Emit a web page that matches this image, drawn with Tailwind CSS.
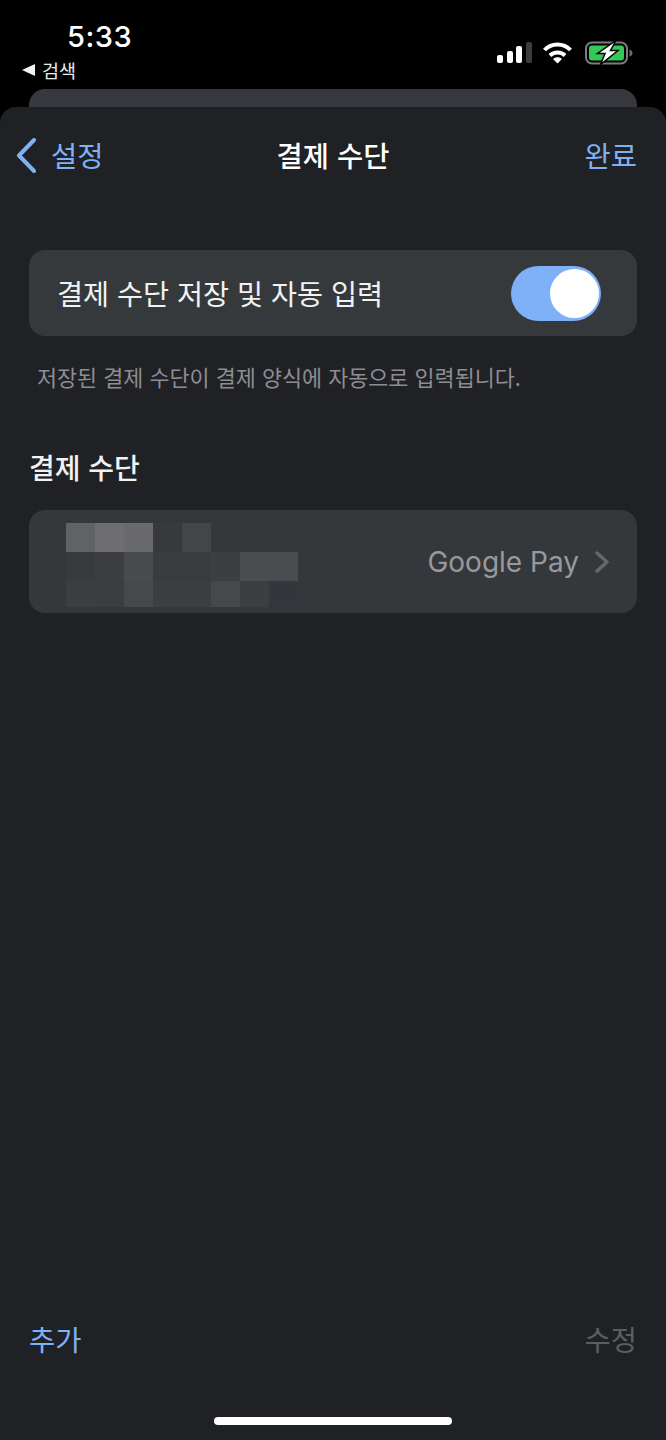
<!DOCTYPE html>
<html lang="ko">
    <head>
        <meta charset="UTF-8" />
        <meta name="viewport" content="width=device-width, initial-scale=1.0" />
        <title>결제 수단</title>
        <script src="https://cdn.jsdelivr.net/npm/@tailwindcss/browser@4"></script>
    </head>
    <body class="bg-black h-[1440px] w-[666px] overflow-hidden font-['Inter','Noto_Sans_CJK_KR',sans-serif] text-white">
        <!-- status bar -->
        <div class="h-[89px] flex justify-between">
            <div class="w-[140px] pl-[22px] pt-[19px]">
                <div class="pl-[45px] text-[29px] leading-[36px] font-medium tracking-[0.5px]">5:33</div>
                <div class="flex items-center gap-[7px] mt-[2px] h-[26px]">
                    <svg width="13" height="12" viewBox="0 0 13 12"><path d="M0 6 13 0v12z" fill="#f2f2f2" /></svg>
                    <span class="text-[18.500px] leading-[26px] text-[#e8e8e8] font-['Noto_Sans_CJK_KR']">검색</span>
                </div>
            </div>
            <div class="flex items-start pt-[40px] pr-[33px]">
                <svg width="35" height="25" viewBox="0 -2 35 25">
                    <rect x="0" y="13" width="6" height="8" rx="2" fill="#fff" />
                    <rect x="10" y="9" width="6" height="12" rx="2" fill="#fff" />
                    <rect x="19" y="4" width="6" height="17" rx="2" fill="#fff" />
                    <rect x="29" y="0" width="6" height="21" rx="2" fill="#3c3c3e" />
                </svg>
                <svg class="ml-[11px]" width="29" height="25" viewBox="0 -2 29 25" fill="none" stroke="#fff" stroke-width="4">
                    <path d="M1.500 8C8.500 .5 20.500 .5 27.500 8" />
                    <path d="M7 13.500C11 9.500 18 9.500 22 13.500" />
                    <path d="M14.500 21.500 10 17C12.500 14.800 16.500 14.800 19 17z" fill="#fff" stroke="none" />
                </svg>
                <svg class="ml-[13px]" width="48" height="25" viewBox="0 -2 48 25">
                    <rect x="1" y="0.500" width="41" height="21" rx="6" fill="none" stroke="#7c7c7c" stroke-width="2" />
                    <rect x="4" y="3.500" width="35" height="15" rx="3" fill="#35c759" />
                    <path d="M44.500 7.500c2 .5 3 2 3 3.500s-1 3-3 3.500z" fill="#6b6b6b" />
                    <path d="M31 -1.500 12.500 11.500H20L15.500 22.500 33 8.500h-7.500z" fill="#fff" stroke="#000" stroke-width="1.500" />
                </svg>
            </div>
        </div>
        <div class="h-[18px] mx-[29px] bg-[#37383d] rounded-t-[16px]"></div>

        <!-- sheet -->
        <div class="h-[1333px] bg-[#202125] rounded-t-[16px] flex flex-col font-['Noto_Sans_CJK_KR','Inter',sans-serif]">
            <div class="relative h-[96px] flex items-center justify-between pl-[16px] pr-[29px] text-[28.500px]">
                <div class="flex items-center gap-[15px] text-[#7fb1f5]">
                    <svg width="20" height="35" viewBox="0 0 20 35" fill="none" stroke="#7fb1f5" stroke-width="4" stroke-linecap="round" stroke-linejoin="round"><path d="M18 2 3 17.500 18 33" /></svg>
                    <span>설정</span>
                </div>
                <div class="absolute left-0 right-0 text-center font-medium text-white">결제 수단</div>
                <span class="text-[#7fb1f5]">완료</span>
            </div>

            <div class="mx-[29px] mt-[47px] h-[86px] bg-[#36393c] rounded-[16px] flex items-center justify-between pl-[28px] pr-[36px]">
                <span class="text-[28.300px] text-[#f2f2f2]">결제 수단 저장 및 자동 입력</span>
                <div class="w-[90px] h-[55px] rounded-full bg-[#7fb1f9] flex items-center justify-end pr-[2px]">
                    <div class="w-[49px] h-[49px] rounded-full bg-white"></div>
                </div>
            </div>
            <p class="mt-[24px] pl-[37px] text-[21.800px] leading-[34px] text-[#8d8e92]">저장된 결제 수단이 결제 양식에 자동으로 입력됩니다.</p>

            <h2 class="mt-[53px] pl-[29px] text-[28px] leading-[40px] font-medium text-[#f2f2f2]">결제 수단</h2>

            <div class="mx-[29px] mt-[23px] h-[103px] bg-[#35383b] rounded-[16px] flex justify-between pl-[37px] pr-[28px]">
                <!-- blurred card name -->
                <div class="grid grid-cols-[repeat(8,29px)] grid-rows-[29px_29px_26px] mt-[13px]">
                    <div class="bg-[#5f6365]"></div><div class="bg-[#6e6e70]"></div><div class="bg-[#6a6a6d]"></div><div class="bg-[#38393c]"></div><div class="bg-[#444548]"></div><div></div><div></div><div></div>
                    <div class="bg-[#383b3d]"></div><div class="bg-[#3c3e42]"></div><div class="bg-[#484c4e]"></div><div class="bg-[#393c3f]"></div><div class="bg-[#393c3f]"></div><div class="bg-[#3c3f42]"></div><div class="bg-[#4a4d50]"></div><div class="bg-[#4a4d50]"></div>
                    <div class="bg-[#3c3f41]"></div><div class="bg-[#3b3d40]"></div><div class="bg-[#45494b]"></div><div class="bg-[#3c3f41]"></div><div class="bg-[#3c3f41]"></div><div class="bg-[#46494b]"></div><div class="bg-[#3c3f41]"></div><div class="bg-[#33363a]"></div>
                </div>
                <div class="flex items-center gap-[16px]">
                    <span class="text-[28px] font-['Inter'] text-[#98999d]">Google Pay</span>
                    <svg width="14" height="22" viewBox="0 0 14 22" fill="none" stroke="#66676b" stroke-width="3.500" stroke-linecap="round" stroke-linejoin="round"><path d="M2 2 12 11 2 20" /></svg>
                </div>
            </div>

            <!-- toolbar -->
            <div class="mt-auto h-[120px] pt-[22px] flex justify-between px-[29px] text-[28.500px] leading-[40px]">
                <span class="text-[#7fb1f5]">추가</span>
                <span class="text-[#5c5d61]">수정</span>
            </div>
            <div class="h-[23px] flex justify-center">
                <div class="w-[238px] h-[8px] rounded-full bg-white"></div>
            </div>
        </div>
    </body>
</html>
